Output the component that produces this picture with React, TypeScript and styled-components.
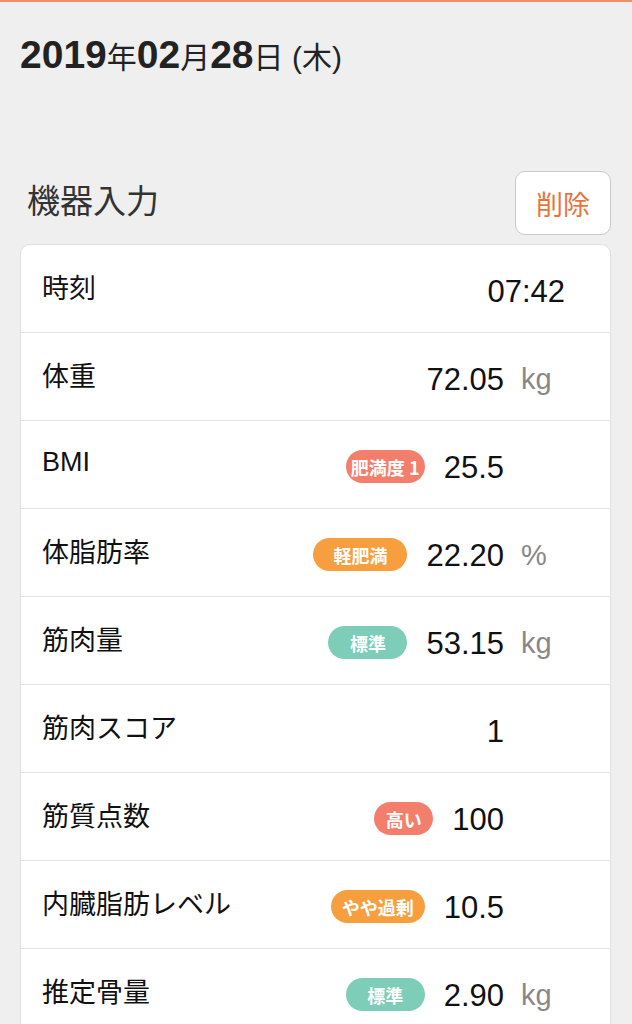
import React from 'react';
import styled, { createGlobalStyle } from 'styled-components';

type Tone = 'salmon' | 'orange' | 'teal';

interface Measure {
  label: string;
  value: string;
  unit?: string;
  badge?: { text: string; tone: Tone; width: number };
  unitWidth?: number;
}

const toneColor: Record<Tone, string> = {
  salmon: '#f47e6c',
  orange: '#f79e3e',
  teal: '#7dcdb9',
};

const rows: Measure[] = [
  { label: '時刻', value: '07:42', unitWidth: 17 },
  { label: '体重', value: '72.05', unit: 'kg' },
  { label: 'BMI', value: '25.5', badge: { text: '肥満度 1', tone: 'salmon', width: 79 } },
  { label: '体脂肪率', value: '22.20', unit: '%', badge: { text: '軽肥満', tone: 'orange', width: 94 } },
  { label: '筋肉量', value: '53.15', unit: 'kg', badge: { text: '標準', tone: 'teal', width: 79 } },
  { label: '筋肉スコア', value: '1' },
  { label: '筋質点数', value: '100', badge: { text: '高い', tone: 'salmon', width: 59 } },
  { label: '内臓脂肪レベル', value: '10.5', badge: { text: 'やや過剰', tone: 'orange', width: 94 } },
  { label: '推定骨量', value: '2.90', unit: 'kg', badge: { text: '標準', tone: 'teal', width: 79 } },
];

const App: React.FC = () => {
  return (
    <>
      <GlobalStyle />
      <Page>
        <DateTitle>
          <b>2019</b>年<b>02</b>月<b>28</b>日 <Weekday>(木)</Weekday>
        </DateTitle>
        <SectionHeader>
          <SectionTitle>機器入力</SectionTitle>
          <DeleteButton>削除</DeleteButton>
        </SectionHeader>
        <Card>
          {rows.map((r) => (
            <Row key={r.label}>
              <Label>{r.label}</Label>
              {r.badge && (
                <Badge $tone={r.badge.tone} $width={r.badge.width}>
                  {r.badge.text}
                </Badge>
              )}
              <Value>{r.value}</Value>
              <Unit $width={r.unitWidth ?? 78}>{r.unit}</Unit>
            </Row>
          ))}
        </Card>
      </Page>
    </>
  );
};

const GlobalStyle = createGlobalStyle`
  body {
    margin: 0;
    background: #efefef;
    font-family: "Liberation Sans", "Noto Sans CJK JP", sans-serif;
    color: #111;
  }
`;

const Page = styled.div`
  min-height: 1022px;
  border-top: 2px solid #eb9068;
  background: #efefef;
  padding: 0 21px 0 20px;
`;

const DateTitle = styled.h1`
  margin: 0;
  padding-top: 33px;
  height: 72px;
  font-size: 30px;
  font-weight: 400;
  color: #222;
  line-height: 40px;

  b {
    font-size: 39px;
    font-weight: 700;
  }
`;

const Weekday = styled.span`
  font-size: 30px;
`;

const SectionHeader = styled.div`
  display: flex;
  align-items: center;
  justify-content: space-between;
  margin-top: 64px;
  padding-left: 7px;
`;

const SectionTitle = styled.h2`
  margin: 0 0 8px;
  font-size: 33px;
  font-weight: 400;
  color: #333;
  font-family: "Noto Sans CJK JP", sans-serif;
`;

const DeleteButton = styled.button`
  width: 96px;
  height: 64px;
  background: #fff;
  border: 1px solid #c9c9c9;
  border-radius: 10px;
  color: #e8743c;
  font-size: 27px;
  font-family: "Noto Sans CJK JP", sans-serif;
  padding: 0;
`;

const Card = styled.div`
  margin-top: 9px;
  background: #fff;
  border: 1px solid #e0e0e0;
  border-radius: 10px;
  overflow: hidden;
`;

const Row = styled.div`
  display: flex;
  align-items: center;
  height: 87px;
  padding: 0 28px 0 21px;
  border-bottom: 1px solid #e2e2e2;
`;

const Label = styled.div`
  flex: 1;
  font-size: 27px;
  color: #111;
  font-family: "Liberation Sans", "Noto Sans CJK JP", sans-serif;
  padding-bottom: 4px;
`;

const Badge = styled.span<{ $tone: Tone; $width: number }>`
  display: inline-flex;
  align-items: center;
  justify-content: center;
  width: ${(p) => p.$width}px;
  height: 33px;
  border-radius: 17px;
  background: ${(p) => toneColor[p.$tone]};
  color: #fff;
  font-size: 18px;
  font-weight: 700;
  font-family: "Noto Sans CJK JP", sans-serif;
  margin-right: 19px;
  margin-top: 4px;
`;

const Value = styled.span`
  font-size: 31px;
  color: #111;
  padding-top: 6px;
`;

const Unit = styled.span<{ $width: number }>`
  width: ${(p) => p.$width}px;
  padding-left: 17px;
  box-sizing: border-box;
  font-size: 29px;
  color: #888;
  padding-top: 6px;
  white-space: nowrap;
`;

export default App;
